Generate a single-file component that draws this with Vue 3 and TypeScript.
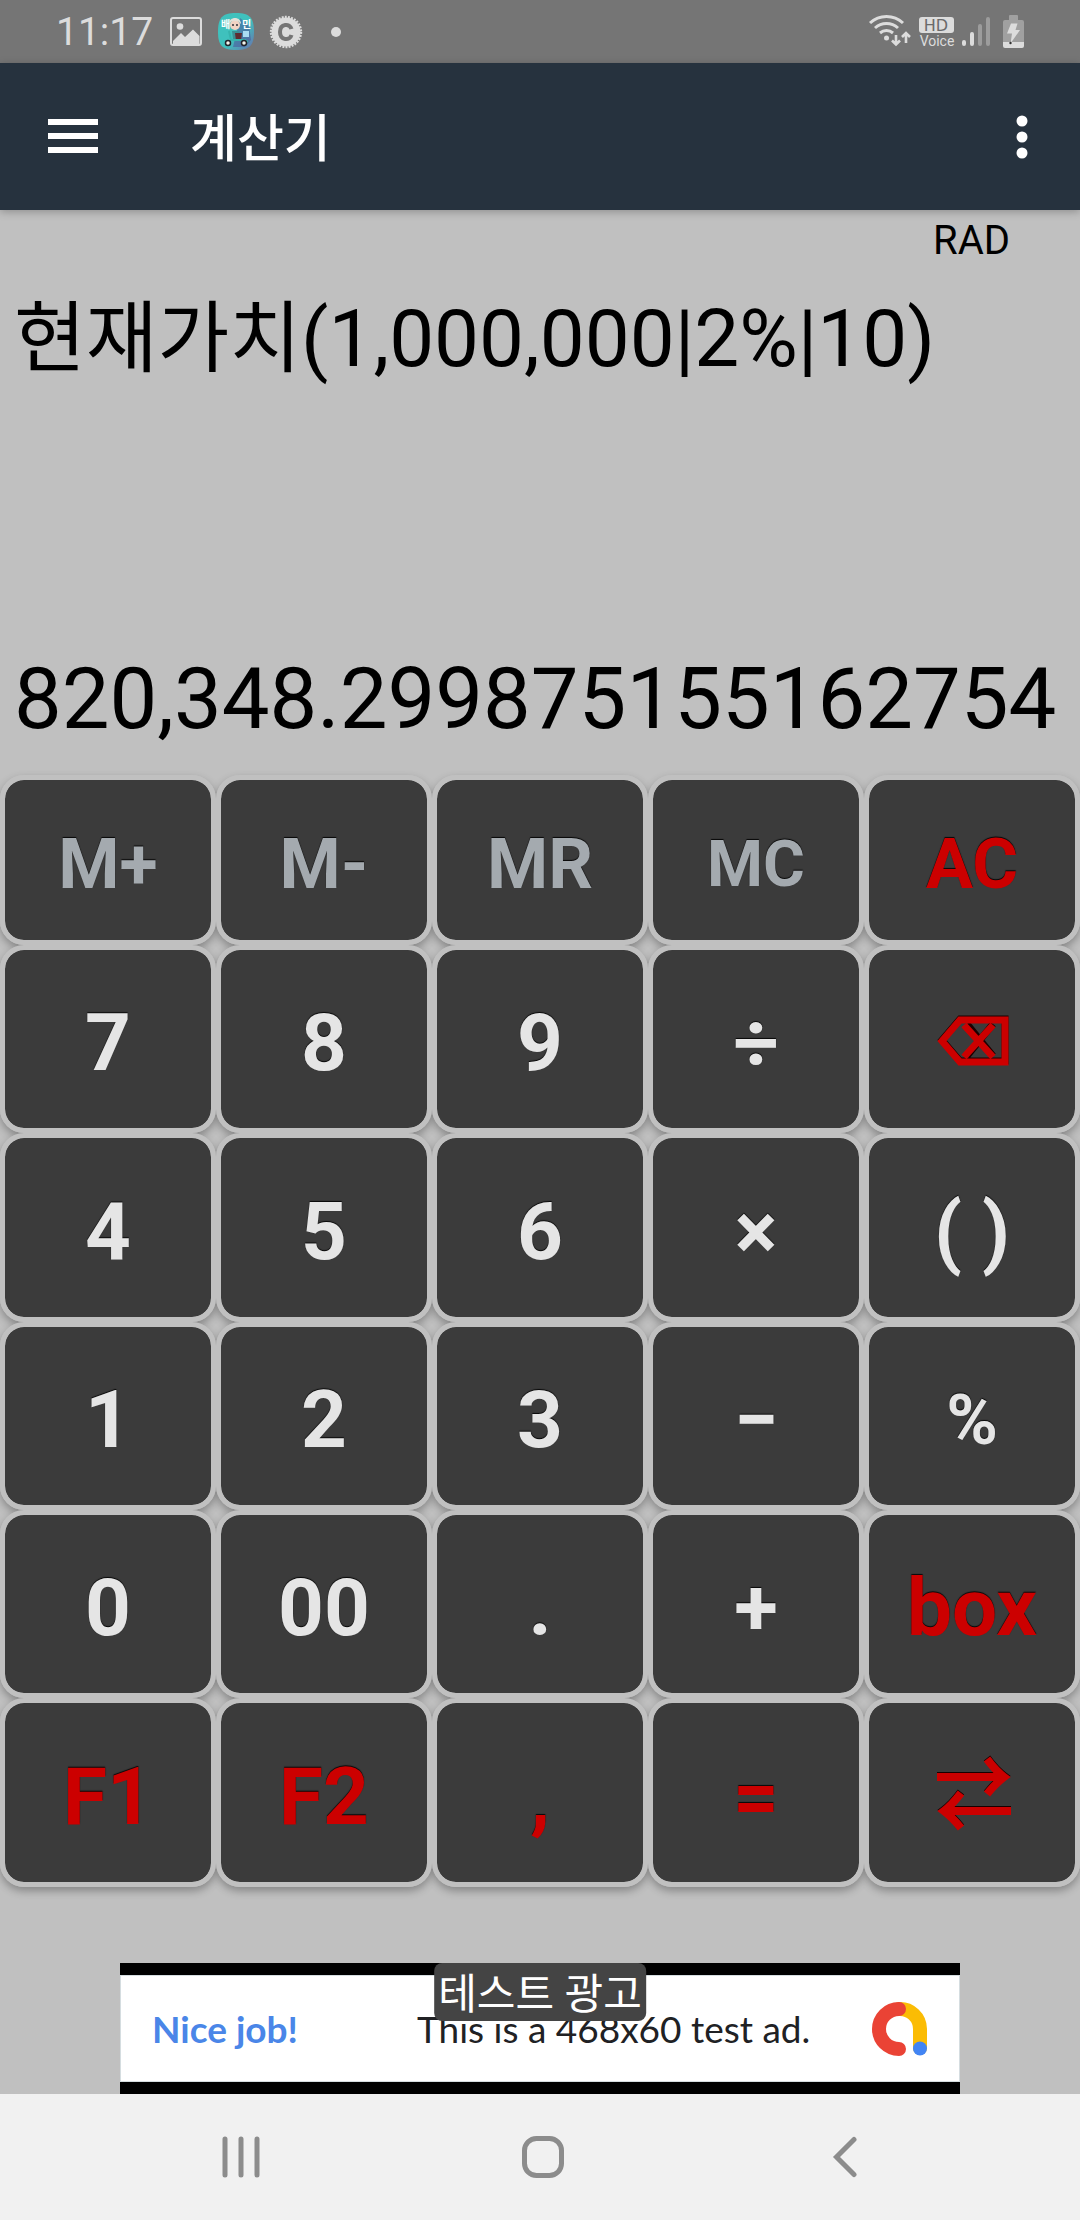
<script setup lang="ts">
type Tone = 'light' | 'memory' | 'accent'
type Size = 'large' | 'medium' | 'small'

interface Key {
  label: string
  tone: Tone
  size: Size
  icon?: 'backspace' | 'swap'
}

const key = (label: string, tone: Tone = 'light', size: Size = 'large', icon?: Key['icon']): Key => ({
  label,
  tone,
  size,
  icon,
})

const keys: Key[] = [
  key('M+', 'memory', 'medium'),
  key('M-', 'memory', 'medium'),
  key('MR', 'memory', 'medium'),
  key('MC', 'memory', 'small'),
  key('AC', 'accent', 'medium'),
  key('7'),
  key('8'),
  key('9'),
  key('÷'),
  key('⌫', 'accent', 'large', 'backspace'),
  key('4'),
  key('5'),
  key('6'),
  key('×'),
  key('( )'),
  key('1'),
  key('2'),
  key('3'),
  key('−'),
  key('%', 'light', 'medium'),
  key('0'),
  key('00'),
  key('.'),
  key('+'),
  key('box', 'accent'),
  key('F1', 'accent'),
  key('F2', 'accent'),
  key(',', 'accent'),
  key('=', 'accent'),
  key('⇄', 'accent', 'large', 'swap'),
]
</script>

<template>
  <div class="screen">
    <div class="status">
      <div class="status-left">
        <span class="clock">11:17</span>
        <svg class="ic-image" width="32" height="30" viewBox="0 0 32 30">
          <rect x="1" y="1" width="30" height="27" rx="2" fill="none" stroke="#dcdcdc" stroke-width="2" />
          <circle cx="10" cy="9.500" r="3.300" fill="#dcdcdc" />
          <path d="M3 24 L11 16 L15 20 L23 12.500 L29.500 19 V27 H3 Z" fill="#dcdcdc" />
        </svg>
        <svg class="ic-app" width="36" height="38" viewBox="0 0 36 38">
          <defs>
            <linearGradient id="teal" x1="0" y1="0" x2="1" y2="1">
              <stop offset="0.550" stop-color="#3fc1bd" />
              <stop offset="1" stop-color="#6a6fae" />
            </linearGradient>
          </defs>
          <path d="M18 0 C32 0 36 5 36 19 C36 32 32 37 18 37 C4 37 0 32 0 19 C0 5 4 0 18 0 Z" fill="url(#teal)" />
          <path d="M22 5 L31 12 L33 27 L27 34 L15 34 Z" fill="#4b5c9c" opacity="0.600" />
          <text x="3" y="15" class="app-word">배</text>
          <text x="24" y="15" class="app-word">민</text>
          <circle cx="17" cy="12" r="5" fill="#f1d3c4" />
          <path d="M11 11 C11 3 23 3 23 11 L20 8 L14 8 Z" fill="#e4e0d8" />
          <path d="M14 12 h2 M18 12 h2" stroke="#30303a" stroke-width="1.500" />
          <path d="M14 18 L21 18 L23 26 L15 26 Z" fill="#3b8f93" />
          <path d="M17 20 L24 20 L23 28 L18 28 Z" fill="#5d2c30" />
          <rect x="25" y="18" width="6" height="6" fill="#a9dcf2" />
          <path d="M11 18 L13 27 L27 27 L30 29" stroke="#36b3ad" stroke-width="2" fill="none" />
          <circle cx="10" cy="30" r="2.500" fill="#f4f4ec" stroke="#22242a" stroke-width="1.500" />
          <circle cx="26" cy="30" r="2.500" fill="#f4f4ec" stroke="#22242a" stroke-width="1.500" />
        </svg>
        <svg class="ic-c" width="34" height="34" viewBox="0 0 34 34">
          <circle cx="17" cy="17" r="14.500" fill="#dcdcdc" />
          <circle cx="17" cy="17" r="15" fill="none" stroke="#dcdcdc" stroke-width="2.400" stroke-dasharray="1.900 1.240" />
          <path d="M22.500 14 C21 8 11 8.500 11 17 C11 25.500 21 26 22.500 20" fill="none" stroke="#757575" stroke-width="4" />
        </svg>
        <span class="more-dot"></span>
      </div>
      <svg class="status-right" width="160" height="40" viewBox="0 0 160 40">
        <g fill="none" stroke="#dcdcdc" stroke-width="3">
          <path d="M2 12 A24 24 0 0 1 35 12" />
          <path d="M7 17 A17 17 0 0 1 30 17" />
          <path d="M12 22 A10 10 0 0 1 25 22" />
        </g>
        <circle cx="18.500" cy="27" r="2.500" fill="#dcdcdc" />
        <path d="M28 24 V33 M24 29.500 L28 33.500 L32 29.500" fill="none" stroke="#dcdcdc" stroke-width="2.600" />
        <path d="M38 32 V22 M34 26 L38 22 L42 26" fill="none" stroke="#dcdcdc" stroke-width="2.600" />
        <rect x="51" y="6" width="35" height="16" rx="3" fill="#dcdcdc" />
        <text x="68" y="20" class="hd">HD</text>
        <text x="69" y="35" class="voice">Voice</text>
        <g stroke-width="4" stroke-linecap="round">
          <path d="M96 31 V33 M104 23 V33" stroke="#dcdcdc" />
          <path d="M112 15 V33 M120 8 V33" stroke="#9c9c9c" />
        </g>
        <path d="M141 5 q0 -1 1 -1 h7 q1 0 1 1 v4 h4 q2 0 2 2 v20 h-21 v-20 q0 -2 2 -2 h4 Z" fill="#a0a0a0" />
        <path d="M135 31 h21 v4 q0 2 -2 2 h-17 q-2 0 -2 -2 Z" fill="#dcdcdc" />
        <path d="M143 12.500 h6.500 l-2 6.500 h4.500 l-9.500 13.500 l1.500 -10 h-5 Z" fill="#dcdcdc" />
        <circle cx="142.500" cy="32" r="1.200" fill="#333" />
      </svg>
    </div>

    <header class="appbar">
      <button class="icon-btn" type="button" aria-label="메뉴">
        <svg width="50" height="36" viewBox="0 0 50 36">
          <path d="M0 3 H50 M0 17 H50 M0 31 H50" stroke="#fff" stroke-width="6" />
        </svg>
      </button>
      <h1>계산기</h1>
      <button class="icon-btn" type="button" aria-label="더보기">
        <svg width="12" height="44" viewBox="0 0 12 44">
          <g fill="#fff">
            <circle cx="6" cy="6" r="5.500" />
            <circle cx="6" cy="22" r="5.500" />
            <circle cx="6" cy="38" r="5.500" />
          </g>
        </svg>
      </button>
    </header>

    <main>
      <section class="display">
        <div class="mode">RAD</div>
        <div class="expression"><span class="fn">현재가치</span>(1,000,000|2%|10)</div>
        <output class="result">820,348.299875155162754</output>
      </section>

      <section class="keypad">
        <button
          v-for="k in keys"
          :key="k.label"
          type="button"
          class="key"
          :class="[k.tone, k.size]"
          :aria-label="k.label"
        >
          <svg v-if="k.icon === 'backspace'" width="76" height="76" viewBox="0 0 76 76">
            <g fill="none" stroke-width="7">
              <path class="under" d="M8 35 L26 14 H71 V56 H26 Z M33 19 L59 51 M59 19 L33 51" />
              <path class="over" d="M8 36 L26 15 H71 V57 H26 Z" />
              <path class="over" d="M30 20 L59 52 M59 20 L30 52" />
            </g>
          </svg>
          <svg v-else-if="k.icon === 'swap'" width="84" height="84" viewBox="0 0 84 84">
            <g fill="none" stroke-width="8">
              <path class="under" d="M7 21 H70 M57 3 Q66 15 74 21 Q66 27 57 38" />
              <path class="under" d="M81 55 H18 M31 37 Q22 49 14 55 Q22 61 31 72" />
              <path class="over" d="M7 22 H70 M57 4 Q66 16 74 22 Q66 28 57 39" />
              <path class="over" d="M81 56 H18 M31 38 Q22 50 14 56 Q22 62 31 73" />
            </g>
          </svg>
          <template v-else>{{ k.label }}</template>
        </button>
      </section>
    </main>

    <aside class="ad">
      <a class="ad-card" href="#">
        <span class="ad-lead">Nice job!</span>
        <span class="ad-text">This is a 468x60 test ad.</span>
        <svg class="ad-logo" width="56" height="56" viewBox="0 0 56 56">
          <g fill="none" stroke-width="14" stroke-linecap="round">
            <path d="M27 8 A20 20 0 0 1 48 28 V47" stroke="#fbbc04" />
            <path d="M27 8 A20 20 0 0 0 27 48" stroke="#ea4335" />
          </g>
          <circle cx="48" cy="47.500" r="7" fill="#4285f4" />
        </svg>
      </a>
      <span class="ad-tag">테스트 광고</span>
    </aside>

    <nav class="navbar">
      <button type="button" aria-label="최근 앱">
        <svg width="42" height="42" viewBox="0 0 42 42">
          <path d="M5 3 V39 M21 3 V39 M37 3 V39" stroke="#8c8c8c" stroke-width="5" stroke-linecap="round" />
        </svg>
      </button>
      <button type="button" aria-label="홈">
        <svg width="42" height="42" viewBox="0 0 42 42">
          <rect x="2.500" y="2.500" width="37" height="37" rx="12" fill="none" stroke="#8c8c8c" stroke-width="5" />
        </svg>
      </button>
      <button type="button" aria-label="뒤로">
        <svg width="42" height="42" viewBox="0 0 42 42">
          <path d="M30 3.500 L12.500 21 L30 38.500" fill="none" stroke="#8c8c8c" stroke-width="5" stroke-linecap="round" />
        </svg>
      </button>
    </nav>
  </div>
</template>

<style>
body {
  margin: 0;
  background: #c0c0c0;
}
</style>

<style scoped>
.screen {
  display: flex;
  flex-direction: column;
  min-height: 100vh;
  background: #c0c0c0;
  font-family: Roboto, 'Noto Sans CJK KR', sans-serif;
  color: #000;
}

svg {
  display: block;
  flex: none;
}

button {
  border: 0;
  padding: 0;
  margin: 0;
  background: none;
  font-family: inherit;
}

.status {
  display: flex;
  justify-content: space-between;
  height: 63px;
  padding: 0 52px 0 56px;
  background: #757575;
  color: #dcdcdc;
}

.status-left {
  display: flex;
  align-items: center;
}

.clock {
  width: 114px;
  font-size: 39px;
  line-height: 64px;
}

.ic-app {
  margin-left: 16px;
}

.ic-c {
  margin-left: 15px;
}

.more-dot {
  width: 10px;
  height: 10px;
  margin-left: 28px;
  border-radius: 50%;
  background: #dcdcdc;
}

.app-word {
  font-size: 10px;
  font-weight: 700;
  fill: #fff;
}

.status-right {
  margin-top: 11px;
}

.hd {
  font-family: 'DejaVu Sans', sans-serif;
  font-size: 16px;
  fill: #6a6a6a;
  text-anchor: middle;
}

.voice {
  font-size: 14px;
  fill: #dcdcdc;
  text-anchor: middle;
}

.appbar {
  display: flex;
  align-items: center;
  position: relative;
  height: 147px;
  padding: 0 52px 0 48px;
  background: #26323e;
  color: #fff;
  box-shadow: 0 2px 8px rgba(0, 0, 0, 0.25);
}

.appbar h1 {
  flex: 1;
  margin: 0 0 0 92px;
  padding-top: 6px;
  font-size: 51px;
  font-weight: 500;
  line-height: 60px;
}

main {
  display: flex;
  flex: 1;
  flex-direction: column;
}

.display {
  display: flex;
  flex: 1;
  flex-direction: column;
  padding: 9px 14px 20px;
}

.mode {
  padding-right: 56px;
  font-size: 40px;
  line-height: 44px;
  text-align: right;
}

.expression {
  margin-top: 26px;
  font-size: 80px;
  line-height: 100px;
  white-space: nowrap;
}

.fn {
  font-size: 78px;
}

.result {
  margin-top: auto;
  font-size: 85px;
  line-height: 112px;
  white-space: nowrap;
}

.keypad {
  display: grid;
  grid-template-columns: repeat(5, 1fr);
  grid-template-rows: 170px 188px 189px 188px 188px 189px;
  isolation: isolate;
}

.key {
  position: relative;
  display: flex;
  align-items: center;
  justify-content: center;
  min-width: 0;
  padding-top: 8px;
  border: 5px solid #c0c0c0;
  border-radius: 24px;
  background: #3b3b3b;
  background-clip: padding-box;
  font-weight: 700;
  text-shadow: 0 -1px 1px rgba(0, 0, 0, 0.9);
}

/* Shadows sit under every key so neighbours never darken each other. */
.key::before {
  content: '';
  position: absolute;
  inset: -5px;
  z-index: -1;
  border-radius: 24px;
  box-shadow: 0 4px 8px rgba(0, 0, 0, 0.3);
}

.large {
  font-size: 80px;
}

.medium {
  font-size: 70px;
}

.small {
  font-size: 64px;
}

.light {
  color: #e5e5e5;
}

.memory {
  color: #a4aaaf;
}

.accent {
  color: #cc0000;
}

.under {
  stroke: #1a0000;
}

.over {
  stroke: #cc0000;
}

.ad {
  position: relative;
  width: 840px;
  max-width: 100%;
  margin: 76px auto 0;
  padding: 12px 0;
  box-sizing: border-box;
  background: #000;
}

.ad-card {
  display: flex;
  align-items: center;
  height: 107px;
  padding: 0 31px;
  box-sizing: border-box;
  border: 1px solid #d5dde0;
  background: #fff;
  color: #202124;
  font-family: Lato, sans-serif;
  font-size: 37px;
  text-decoration: none;
  white-space: nowrap;
}

.ad-lead {
  width: 265px;
  font-weight: 700;
  color: #4a86e8;
}

.ad-logo {
  margin-left: auto;
}

.ad-tag {
  position: absolute;
  top: 0;
  left: 50%;
  transform: translateX(-50%);
  padding: 6px 4px 0;
  border-radius: 8px;
  background: #444;
  color: #fff;
  font-size: 42px;
  line-height: 52px;
  white-space: nowrap;
}

.navbar {
  display: grid;
  grid-template-columns: repeat(3, 1fr);
  height: 126px;
  padding: 0 84px 0 90px;
  background: #f1f1f1;
}

.navbar button {
  display: flex;
  align-items: center;
  justify-content: center;
}
</style>
